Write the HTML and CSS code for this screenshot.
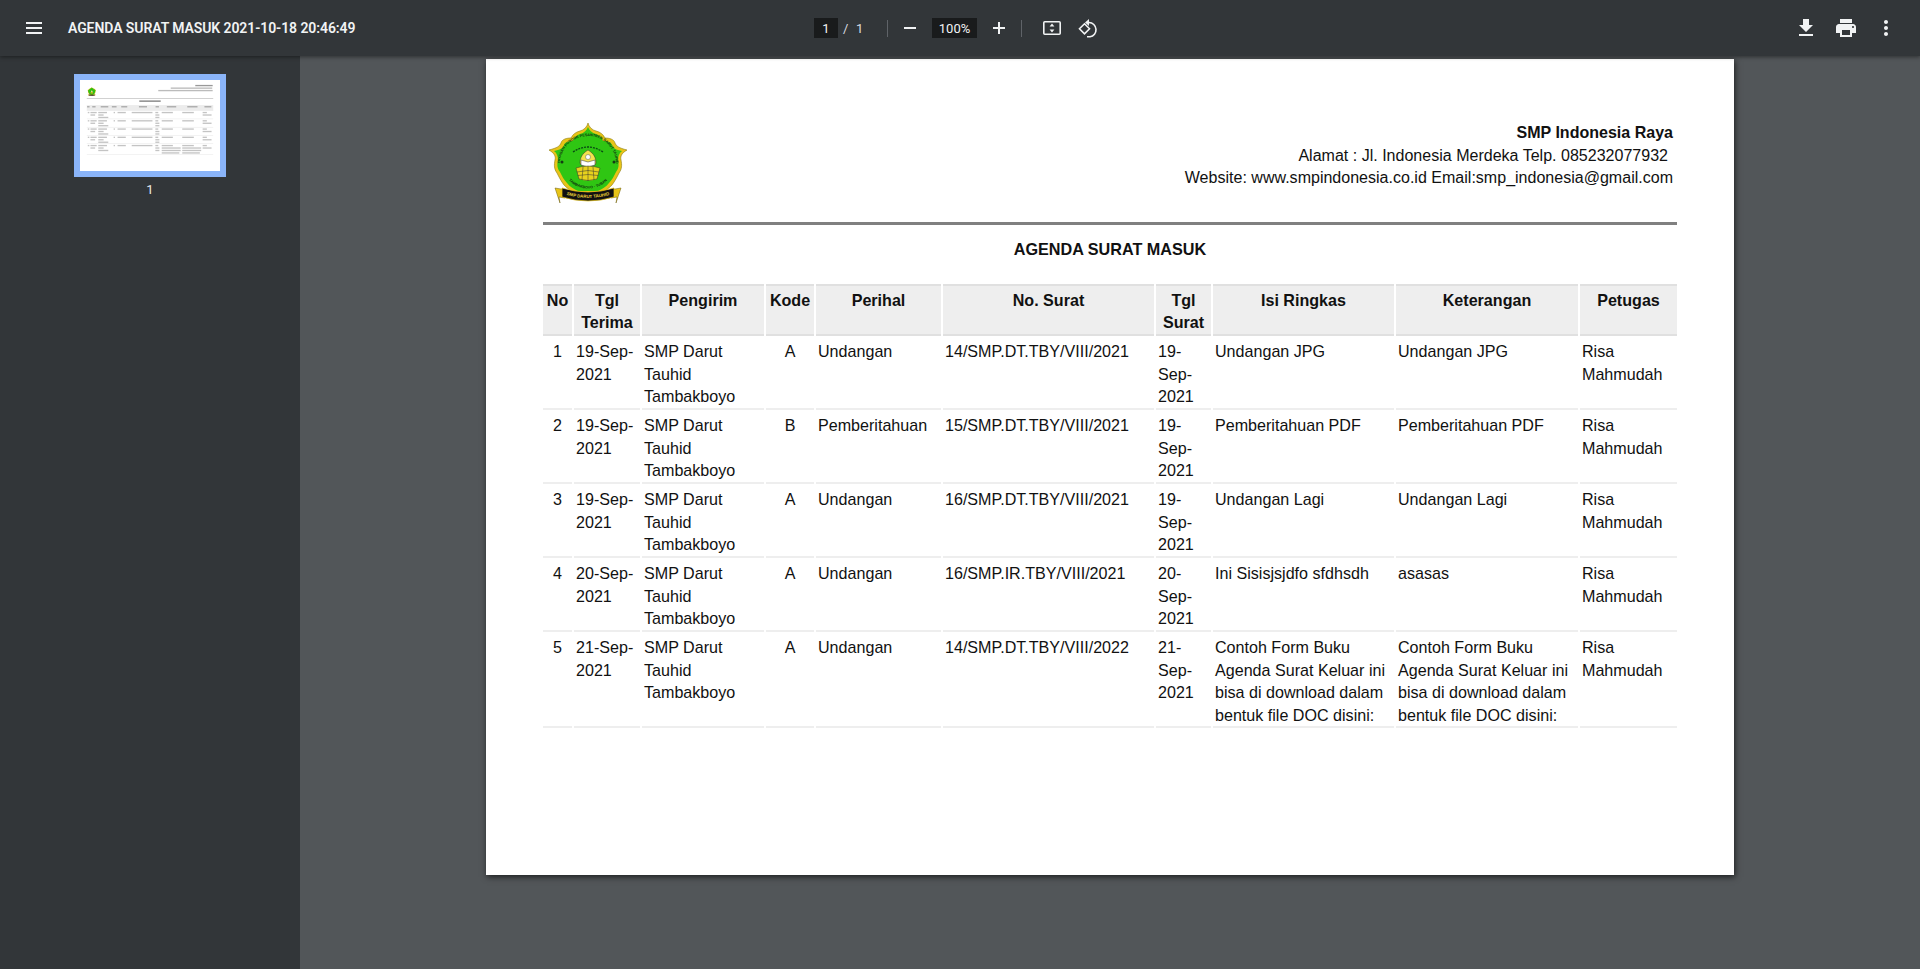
FILE: index.html
```html
<!DOCTYPE html>
<html lang="id">
<head>
<meta charset="utf-8">
<title>AGENDA SURAT MASUK 2021-10-18 20:46:49</title>
<link rel="stylesheet" href="styles.css">
</head>
<body>
<svg class="defs" width="0" height="0" aria-hidden="true">
  <defs>
    <symbol id="logo" viewBox="0 0 80 84">
      <path d="M40 1 C41 5 44 8 48 9 C52 10 55 12 57 16 C61 16 66 17 67 21 C68 24 71 26 79 28 C74 31 72 34 73 38 C74 43 74 47 71 51 C69 55 67 59 64 63 C60 67 56 70 52 72 L28 72 C24 70 20 67 16 63 C13 59 11 55 9 51 C6 47 6 43 7 38 C8 34 6 31 1 28 C9 26 12 24 13 21 C14 17 19 16 23 16 C25 12 28 10 32 9 C36 8 39 5 40 1 Z" fill="#e8c417" stroke="#8c7a10" stroke-width=".6"/>
      <path d="M40 5 C41 8 44 11 48 12 C51 13 54 15 55 19 C59 19 63 20 64 23 C65 26 68 28 74 29 C71 31 70 35 70 38 C71 43 71 46 68 50 C66 54 64 58 61 61 C58 65 54 67 50 69 L30 69 C26 67 22 65 19 61 C16 58 14 54 12 50 C9 46 9 43 10 38 C10 35 9 31 6 29 C12 28 15 26 16 23 C17 20 21 19 25 19 C26 15 29 13 32 12 C36 11 39 8 40 5 Z" fill="#2fc613"/>
      <defs>
        <path id="logo-arc" d="M12 42 A28 28 0 1 1 68 42"/>
        <path id="logo-arc2" d="M19 56 A26 26 0 0 0 61 56"/>
        <path id="logo-banner" d="M16 72 Q40 80 64 72"/>
      </defs>
      <text class="logo-ring"><textPath href="#logo-arc" startOffset="50%" text-anchor="middle">YAYASAN PONDOK PESANTREN DARUT TAUHID</textPath></text>
      <text class="logo-ring"><textPath href="#logo-arc2" startOffset="50%" text-anchor="middle">TAMBAKBOYO · TUBAN</textPath></text>
      <path d="M25 30 Q40 20 55 30" fill="none" stroke="#0a4a14" stroke-width="1.300" stroke-dasharray="2 1"/>
      <path d="M32 41 C32 33 37 30 40 28 C43 30 48 33 48 41 C48 45 32 45 32 41 Z" fill="#f3e24d" stroke="#333" stroke-width=".5"/>
      <path d="M33 38 L40 40 L47 38 L47 43 L40 45 L33 43 Z" fill="#fff" stroke="#333" stroke-width=".5"/>
      <circle cx="40" cy="35" r="2.500" fill="#fff" stroke="#333" stroke-width=".4"/>
      <path d="M28 46 Q40 42 52 46 L49 57 Q40 60 31 57 Z" fill="#e8d21c" stroke="#333" stroke-width=".5"/>
      <path d="M29 50 Q40 47 51 50 M30 53.500 Q40 51.500 50 53.500 M35 45 L34 58 M40 44 V59 M45 45 L46 58" fill="none" stroke="#333" stroke-width=".5"/>
      <circle cx="14" cy="40" r="1.500" fill="#143b14"/>
      <circle cx="66" cy="40" r="1.500" fill="#143b14"/>
      <path d="M7 66 L19 68 L17 76 L11 75 L12 81 Z M73 66 L61 68 L63 76 L69 75 L68 81 Z" fill="#e8c417" stroke="#6b5c0c" stroke-width=".5"/>
      <path d="M14 66 Q40 74 66 66 L66 75 Q40 83 14 75 Z" fill="#111" stroke="#e8c417" stroke-width=".7"/>
      <text class="logo-banner"><textPath href="#logo-banner" startOffset="50%" text-anchor="middle">SMP DARUT TAUHID</textPath></text>
    </symbol>
  </defs>
</svg>

<header class="toolbar">
  <div class="tb-left">
    <button class="icon-btn" aria-label="Menu">
      <svg viewBox="0 0 24 24"><path d="M4 6h16v2H4zM4 11h16v2H4zM4 16h16v2H4z"/></svg>
    </button>
    <span class="doc-title">AGENDA SURAT MASUK 2021-10-18 20:46:49</span>
  </div>
  <div class="tb-center">
    <span class="field field-page">1</span>
    <span class="page-count"><span class="slash">/</span><span class="total">1</span></span>
    <span class="sep"></span>
    <button class="icon-btn narrow" aria-label="Perkecil">
      <svg viewBox="0 0 24 24"><path d="M6 11h12v2H6z"/></svg>
    </button>
    <span class="field field-zoom">100%</span>
    <button class="icon-btn narrow" aria-label="Perbesar">
      <svg viewBox="0 0 24 24"><path d="M18 13h-5v5h-2v-5H6v-2h5V6h2v5h5z"/></svg>
    </button>
    <span class="sep sep-b"></span>
    <button class="icon-btn narrow" aria-label="Sesuaikan">
      <svg viewBox="0 0 24 24"><rect class="outline" x="3.800" y="5.800" width="16.400" height="12.400" rx="1"/><path d="M12 7.500l2.400 3h-4.800zM12 16.500l-2.400-3h4.800z"/></svg>
    </button>
    <button class="icon-btn narrow rotate" aria-label="Putar">
      <svg viewBox="0 0 24 24"><path class="outline" d="M8.500 7.800l5 5-5 5-5-5z"/><path class="outline" d="M11 6.500h2a7.200 7.200 0 0 1 1 14.300h-3"/><path d="M13 3l-4 3.500 4 3.500z"/></svg>
    </button>
  </div>
  <div class="tb-right">
    <button class="icon-btn" aria-label="Unduh">
      <svg viewBox="0 0 24 24"><path d="M19 9h-4V3H9v6H5l7 7 7-7zM5 18v2h14v-2H5z"/></svg>
    </button>
    <button class="icon-btn" aria-label="Cetak">
      <svg viewBox="0 0 24 24"><path d="M19 8H5c-1.660 0-3 1.340-3 3v6h4v4h12v-4h4v-6c0-1.660-1.340-3-3-3zm-3 11H8v-5h8v5zm3-7c-.55 0-1-.45-1-1s.45-1 1-1 1 .45 1 1-.45 1-1 1zm-1-9H6v4h12V3z"/></svg>
    </button>
    <button class="icon-btn" aria-label="Lainnya">
      <svg viewBox="0 0 24 24"><path d="M12 8c1.100 0 2-.9 2-2s-.9-2-2-2-2 .9-2 2 .9 2 2 2zm0 2c-1.100 0-2 .9-2 2s.9 2 2 2 2-.9 2-2-.9-2-2-2zm0 6c-1.100 0-2 .9-2 2s.9 2 2 2 2-.9 2-2-.9-2-2-2z"/></svg>
    </button>
  </div>
</header>

<div class="workspace">
  <aside class="sidebar">
    <figure class="thumb">
      <div class="thumb-frame">
        <svg class="thumb-page" viewBox="0 0 1248 816" aria-hidden="true">
          <defs>
            <g id="thumb-row">
              <g fill="#c4c4c4">
                <rect x="66" y="0" width="14" height="12"/>
                <rect x="90" y="0" width="56" height="12"/><rect x="90" y="22" width="42" height="12"/>
                <rect x="160" y="0" width="78" height="12"/><rect x="160" y="22" width="48" height="12"/><rect x="160" y="44" width="90" height="12"/>
                <rect x="298" y="0" width="12" height="12"/>
                <rect x="333" y="0" width="74" height="12"/>
                <rect x="460" y="0" width="186" height="12"/>
                <rect x="672" y="0" width="26" height="12"/><rect x="672" y="22" width="36" height="12"/><rect x="672" y="44" width="36" height="12"/>
                <rect x="729" y="0" width="100" height="12"/>
                <rect x="913" y="0" width="104" height="12"/>
                <rect x="1096" y="0" width="38" height="12"/><rect x="1096" y="22" width="80" height="12"/>
              </g>
            </g>
          </defs>
          <use href="#logo" x="62" y="63" width="80" height="84"/>
          <g fill="#bbb">
            <rect x="1030" y="44" width="156" height="12" fill="#999"/>
            <rect x="810" y="67" width="372" height="12"/>
            <rect x="698" y="89" width="488" height="12"/>
            <rect x="57" y="163" width="1134" height="6"/>
            <rect x="528" y="183" width="192" height="13" fill="#888"/>
          </g>
          <rect x="57" y="225" width="1134" height="52" fill="#ececec"/>
          <g fill="#aaa">
            <rect x="60" y="234" width="22" height="12"/><rect x="106" y="234" width="30" height="12"/><rect x="182" y="234" width="68" height="12"/><rect x="282" y="234" width="42" height="12"/><rect x="366" y="234" width="54" height="12"/><rect x="525" y="234" width="72" height="12"/><rect x="674" y="234" width="30" height="12"/><rect x="775" y="234" width="84" height="12"/><rect x="958" y="234" width="92" height="12"/><rect x="1112" y="234" width="62" height="12"/>
          </g>
          <use href="#thumb-row" y="286"/>
          <use href="#thumb-row" y="360"/>
          <use href="#thumb-row" y="434"/>
          <use href="#thumb-row" y="508"/>
          <use href="#thumb-row" y="582"/>
          <g fill="#c4c4c4">
            <rect x="729" y="604" width="170" height="12"/><rect x="729" y="626" width="170" height="12"/><rect x="729" y="648" width="158" height="12"/>
            <rect x="913" y="604" width="170" height="12"/><rect x="913" y="626" width="170" height="12"/><rect x="913" y="648" width="158" height="12"/>
          </g>
          <g fill="#e4e4e4">
            <rect x="57" y="347" width="1134" height="4"/><rect x="57" y="421" width="1134" height="4"/><rect x="57" y="495" width="1134" height="4"/><rect x="57" y="569" width="1134" height="4"/><rect x="57" y="667" width="1134" height="4"/>
          </g>
        </svg>
      </div>
      <figcaption class="thumb-label">1</figcaption>
    </figure>
  </aside>

  <main class="viewer">
    <article class="page">
      <div class="letterhead">
        <svg class="logo" aria-label="Logo SMP Darut Tauhid"><use href="#logo"/></svg>
        <div class="school">
          <strong>SMP Indonesia Raya</strong>
          <span class="addr">Alamat : Jl. Indonesia Merdeka Telp. 085232077932</span>
          <span>Website: www.smpindonesia.co.id Email:smp_indonesia@gmail.com</span>
        </div>
      </div>
      <div class="rule"></div>
      <h1 class="doc-head">AGENDA SURAT MASUK</h1>
      <table class="agenda">
        <colgroup>
          <col class="c1"><col class="c2"><col class="c3"><col class="c4"><col class="c5"><col class="c6"><col class="c7"><col class="c8"><col class="c9"><col class="c10">
        </colgroup>
        <thead>
          <tr><th>No</th><th>Tgl Terima</th><th>Pengirim</th><th>Kode</th><th>Perihal</th><th>No. Surat</th><th>Tgl Surat</th><th>Isi Ringkas</th><th>Keterangan</th><th>Petugas</th></tr>
        </thead>
        <tbody>
          <tr><td class="ctr">1</td><td>19-Sep-2021</td><td>SMP Darut Tauhid Tambakboyo</td><td class="ctr">A</td><td>Undangan</td><td>14/SMP.DT.TBY/VIII/2021</td><td>19-Sep-2021</td><td>Undangan JPG</td><td>Undangan JPG</td><td>Risa Mahmudah</td></tr>
          <tr><td class="ctr">2</td><td>19-Sep-2021</td><td>SMP Darut Tauhid Tambakboyo</td><td class="ctr">B</td><td>Pemberitahuan</td><td>15/SMP.DT.TBY/VIII/2021</td><td>19-Sep-2021</td><td>Pemberitahuan PDF</td><td>Pemberitahuan PDF</td><td>Risa Mahmudah</td></tr>
          <tr><td class="ctr">3</td><td>19-Sep-2021</td><td>SMP Darut Tauhid Tambakboyo</td><td class="ctr">A</td><td>Undangan</td><td>16/SMP.DT.TBY/VIII/2021</td><td>19-Sep-2021</td><td>Undangan Lagi</td><td>Undangan Lagi</td><td>Risa Mahmudah</td></tr>
          <tr><td class="ctr">4</td><td>20-Sep-2021</td><td>SMP Darut Tauhid Tambakboyo</td><td class="ctr">A</td><td>Undangan</td><td>16/SMP.IR.TBY/VIII/2021</td><td>20-Sep-2021</td><td>Ini Sisisjsjdfo sfdhsdh</td><td>asasas</td><td>Risa Mahmudah</td></tr>
          <tr><td class="ctr">5</td><td>21-Sep-2021</td><td>SMP Darut Tauhid Tambakboyo</td><td class="ctr">A</td><td>Undangan</td><td>14/SMP.DT.TBY/VIII/2022</td><td>21-Sep-2021</td><td>Contoh Form Buku Agenda Surat Keluar ini bisa di download dalam bentuk file DOC disini:</td><td>Contoh Form Buku Agenda Surat Keluar ini bisa di download dalam bentuk file DOC disini:</td><td>Risa Mahmudah</td></tr>
        </tbody>
      </table>
    </article>
  </main>
</div>
</body>
</html>
```

FILE: styles.css
```css
* { box-sizing: border-box; }
html, body { height: 100%; }
body {
  margin: 0;
  overflow: hidden;
  display: flex;
  flex-direction: column;
  background: #525659;
  font-family: Roboto, "Liberation Sans", sans-serif;
  color: #f1f3f4;
}
.defs { display: block; height: 0; }

/* toolbar */
.toolbar {
  height: 56px;
  flex: none;
  display: grid;
  grid-template-columns: 1fr auto 1fr;
  align-items: center;
  padding: 0 14px;
  background: #323639;
  box-shadow: 0 1px 4px rgba(0, 0, 0, .45);
  position: relative;
  z-index: 2;
}
.tb-left, .tb-center, .tb-right { display: flex; align-items: center; }
.tb-center { padding-right: 1px; }
.tb-right { justify-content: flex-end; }
.icon-btn {
  width: 40px;
  height: 40px;
  padding: 0;
  border: 0;
  background: none;
  display: flex;
  align-items: center;
  justify-content: center;
  color: #f1f3f4;
}
.icon-btn.narrow { width: 34px; }
.icon-btn.rotate { margin-left: 2px; }
.icon-btn svg { width: 24px; height: 24px; fill: currentColor; }
.icon-btn svg .outline { fill: none; stroke: currentColor; stroke-width: 1.6; }
.doc-title {
  margin-left: 14px;
  font-size: 14px;
  font-weight: 600;
  letter-spacing: -.08px;
  white-space: nowrap;
}
.field {
  height: 20px;
  display: flex;
  align-items: center;
  justify-content: center;
  background: #191b1c;
  font-size: 13px;
  color: #f1f3f4;
}
.field-page { width: 24px; }
.field-zoom { width: 45px; margin: 0 5px; }
.page-count {
  width: 49px;
  padding-left: 5px;
  display: flex;
  font-size: 13px;
  color: #dadce0;
}
.slash { width: 13px; }
.sep { width: 1px; height: 17px; background: #5f6368; margin-right: 5px; }
.sep-b { margin: 0 13px 0 5px; }

/* workspace */
.workspace {
  flex: 1;
  min-height: 0;
  display: grid;
  grid-template-columns: 300px 1fr;
}
.sidebar {
  background: #323639;
  padding-top: 18px;
  display: flex;
  justify-content: center;
}
.thumb { margin: 0; width: 152px; }
.thumb-frame {
  border: 6px solid #8ab4f8;
  height: 103px;
  background: #fff;
}
.thumb-page { display: block; width: 140px; height: 91px; }
.thumb-label {
  margin-top: 5px;
  text-align: center;
  font-size: 13px;
  line-height: 16px;
  color: #e8eaed;
}

/* document page */
.viewer { padding-top: 3px; display: flex; justify-content: center; overflow: hidden; }
.page {
  width: 1248px;
  height: 816px;
  padding: 0 57px;
  background: #fff;
  box-shadow: 1px 2px 6px rgba(0, 0, 0, .65);
  color: #111;
  font-family: "Liberation Sans", Arial, sans-serif;
  font-size: 16.100px;
}
.logo-ring {
  font-family: "Liberation Sans", sans-serif;
  font-size: 3.700px;
  font-weight: 700;
  fill: #10340f;
}
.logo-banner {
  font-family: "Liberation Sans", sans-serif;
  font-size: 4.400px;
  font-weight: 700;
  fill: #f2d83a;
}
.letterhead {
  height: 163px;
  padding: 63px 4px 0 5px;
  display: flex;
  justify-content: space-between;
}
.logo { width: 80px; height: 84px; flex: none; }
.school {
  display: flex;
  flex-direction: column;
  align-items: flex-end;
  line-height: 22.500px;
  margin-top: -1px;
  font-size: 16.050px;
}
.addr { padding-right: 5px; }
.rule { height: 3px; background: #808080; }
.doc-head {
  margin: 13px 0 24px;
  text-align: center;
  font-size: 16.200px;
  line-height: 22px;
  font-weight: 700;
}
.agenda {
  width: 1138px;
  margin-left: -2px;
  table-layout: fixed;
  border-collapse: separate;
  border-spacing: 2px 0;
  line-height: 22.500px;
}
.c1 { width: 29px; } .c2 { width: 66px; } .c3 { width: 122px; } .c4 { width: 48px; } .c5 { width: 125px; }
.c6 { width: 211px; } .c7 { width: 55px; } .c8 { width: 181px; } .c9 { width: 182px; } .c10 { width: 97px; }
.agenda th {
  padding: 2.750px 2px 0;
  background: #eee;
  border-top: 2px solid #e0e0e0;
  border-bottom: 2px solid #e0e0e0;
  vertical-align: top;
  font-weight: 700;
}
.agenda td {
  padding: 4.500px 2px 0;
  border-bottom: 2px solid #eee;
  vertical-align: top;
}
.agenda .ctr { text-align: center; }
```
